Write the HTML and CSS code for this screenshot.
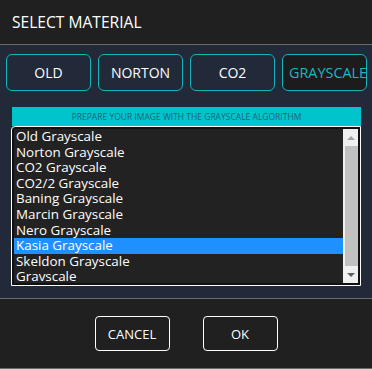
FILE: index.html
```html
<!DOCTYPE html>
<html lang="en">
<head>
    <meta charset="UTF-8">
    <title>Select Material</title>
    <link rel="stylesheet" href="styles.css">
</head>
<body>
    <div class="dialog">
        <div class="header">SELECT MATERIAL</div>

        <div class="content">
            <div class="tabs">
                <button class="tab">OLD</button>
                <button class="tab">NORTON</button>
                <button class="tab">CO2</button>
                <button class="tab active">GRAYSCALE</button>
            </div>

            <div class="banner">PREPARE YOUR IMAGE WITH THE GRAYSCALE ALGORITHM</div>

            <div class="listbox">
                <ul class="items">
                    <li>Old Grayscale</li>
                    <li>Norton Grayscale</li>
                    <li>CO2 Grayscale</li>
                    <li>CO2/2 Grayscale</li>
                    <li>Baning Grayscale</li>
                    <li>Marcin Grayscale</li>
                    <li>Nero Grayscale</li>
                    <li class="selected">Kasia Grayscale</li>
                    <li>Skeldon Grayscale</li>
                    <li>Gravscale</li>
                </ul>
                <div class="scrollbar">
                    <div class="arrow up"></div>
                    <div class="thumb"></div>
                    <div class="arrow down"></div>
                </div>
            </div>
        </div>

        <div class="footer">
            <button class="btn">CANCEL</button>
            <button class="btn">OK</button>
        </div>
    </div>
</body>
</html>
```

FILE: styles.css
```css
body {
    margin: 0;
    padding: 0;
    background-color: #202020;
    font-family: 'Open Sans', 'Noto Sans', sans-serif;
    color: white;
}

.dialog {
    width: 372px;
    height: 369px;
    display: flex;
    flex-direction: column;
    overflow: hidden;
}

.header {
    height: 45px;
    box-sizing: border-box;
    padding: 11px 12px 0;
    font-size: 15.6px;
    line-height: 22px;
    border-bottom: 1px solid #6b6b6b;
}

.content {
    background-color: #222a39;
    height: 253px;
    padding-top: 9px;
    box-sizing: border-box;
}

.tabs {
    display: grid;
    grid-template-columns: 85px 85px 85px 85px;
    column-gap: 7px;
    padding-left: 6px;
}

.tab {
    height: 37px;
    padding: 0;
    background-color: #222a39;
    border: 1px solid #14b4bc;
    border-radius: 6px;
    color: white;
    font-family: 'Open Sans', 'Noto Sans', sans-serif;
    font-size: 14px;
    white-space: nowrap;
    overflow: hidden;
}

.tab.active {
    background-color: #1c1c1c;
    color: #18b8c0;
    text-align: left;
    padding-left: 6px;
    font-size: 14.4px;
}

.banner {
    margin: 16px 11px 0 12px;
    height: 19px;
    background-color: #00c4cc;
    color: #1d6577;
    font-size: 8.5px;
    line-height: 19px;
    text-align: center;
}

.listbox {
    margin: 0 11px 0 11px;
    height: 160px;
    box-sizing: border-box;
    border: 1px solid white;
    border-top-left-radius: 4px;
    background-color: #222222;
    box-shadow: inset 0 0 0 2px #111;
    display: flex;
    padding: 2px;
}

.items {
    list-style: none;
    margin: 0;
    padding: 0;
    flex: 1;
    overflow: hidden;
}

.items li {
    height: 15.6px;
    line-height: 15.6px;
    padding-left: 2px;
    font-size: 13.4px;
    white-space: nowrap;
}

.items li.selected {
    background-color: #1e90ff;
}

.scrollbar {
    width: 15px;
    background-color: #f0f0f0;
    display: flex;
    flex-direction: column;
}

.arrow {
    height: 17px;
    display: flex;
    align-items: center;
    justify-content: center;
}

.arrow::after {
    content: "";
    border-left: 4px solid transparent;
    border-right: 4px solid transparent;
}

.arrow.up::after {
    border-bottom: 4px solid #a3a3a3;
}

.arrow.down::after {
    border-top: 4px solid #606060;
}

.thumb {
    flex: 1;
    margin-left: 2px;
    background-color: #c1c1c1;
}

.footer {
    flex: 1;
    border-top: 1px solid #6b6b6b;
    border-bottom: 1px solid #6b6b6b;
    display: flex;
    justify-content: center;
    align-items: flex-start;
    gap: 33px;
    padding-top: 17px;
}

.btn {
    width: 75px;
    height: 35px;
    background-color: #202020;
    border: 1px solid white;
    border-radius: 4px;
    color: white;
    font-family: 'Open Sans', 'Noto Sans', sans-serif;
    font-size: 13px;
    cursor: pointer;
}
```
